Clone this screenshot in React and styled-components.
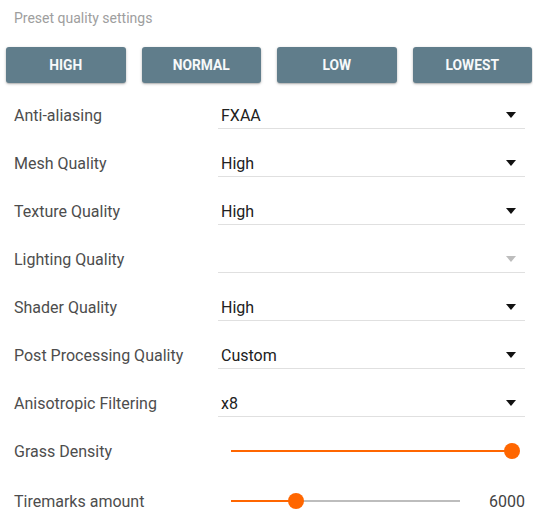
import React from "react";
import styled, { createGlobalStyle } from "styled-components";

const Global = createGlobalStyle`
  html, body { margin: 0; padding: 0; background: #fff; }
  body { font-family: Roboto, "Noto Sans", "Liberation Sans", sans-serif; }
`;

const Page = styled.div`
  width: 533px;
  box-sizing: border-box;
  padding: 0 8px 0 14px;
`;

const Title = styled.div`
  margin-top: 9px;
  height: 18px;
  line-height: 18px;
  font-size: 14px;
  color: #9e9e9e;
`;

const ButtonRow = styled.div`
  display: flex;
  gap: 16px;
  margin: 20px -7px 8px -8px;
`;

const PresetButton = styled.button`
  flex: 1;
  height: 36px;
  border: none;
  border-radius: 3px;
  background: #607d8b;
  color: #f7f9fa;
  font-family: Roboto, "Liberation Sans", sans-serif;
  font-weight: 700;
  font-size: 13.8px;
  text-transform: uppercase;
  box-shadow: 0 1px 3px rgba(0, 0, 0, 0.25), 0 1px 1px rgba(0, 0, 0, 0.12);
  cursor: pointer;
  padding: 0;
`;

const Row = styled.div`
  display: grid;
  grid-template-columns: 204px 1fr;
  align-items: center;
  height: ${(p) => p.$h || 48}px;
`;

const Label = styled.div`
  font-size: 16px;
  color: #4d4d4d;
  white-space: nowrap;
`;

const Select = styled.div`
  height: 28px;
  box-sizing: border-box;
  border-bottom: 1px solid #e0e0e0;
  display: flex;
  align-items: center;
  justify-content: space-between;
  padding: 2px 9px 0 3px;
  font-size: 16px;
  color: ${(p) => (p.$disabled ? "#bdbdbd" : "#212121")};
`;

const Arrow = styled.span`
  width: 0;
  height: 0;
  border-left: 5.5px solid transparent;
  border-right: 5.5px solid transparent;
  border-top: 6px solid ${(p) => (p.$disabled ? "#bdbdbd" : "#111")};
  margin-top: -1px;
`;

const SliderWrap = styled.div`
  display: flex;
  align-items: center;
  padding-left: 13px;
  padding-right: ${(p) => (p.$hasValue ? "1px" : "13px")};
  gap: 29px;
`;

const Track = styled.div`
  position: relative;
  flex: 1;
  height: 2px;
  background: #bdbdbd;
`;

const Fill = styled.div`
  position: absolute;
  left: 0;
  top: 0;
  height: 2px;
  background: #ff6600;
`;

const Thumb = styled.div`
  position: absolute;
  top: 1px;
  width: 16px;
  height: 16px;
  border-radius: 50%;
  background: #ff6600;
  transform: translate(-50%, -50%);
`;

const Value = styled.div`
  font-size: 16px;
  color: #424242;
  width: 35px;
  text-align: right;
`;

const selects = [
  ["Anti-aliasing", "FXAA"],
  ["Mesh Quality", "High"],
  ["Texture Quality", "High"],
  ["Lighting Quality", "", true],
  ["Shader Quality", "High"],
  ["Post Processing Quality", "Custom"],
  ["Anisotropic Filtering", "x8"],
];

function Slider({ pct, value }) {
  return (
    <SliderWrap $hasValue={value !== undefined}>
      <Track>
        <Fill style={{ width: `${pct}%` }} />
        <Thumb style={{ left: `${pct}%` }} />
      </Track>
      {value !== undefined && <Value>{value}</Value>}
    </SliderWrap>
  );
}

export default function App() {
  return (
    <>
      <Global />
      <Page>
        <Title>Preset quality settings</Title>
        <ButtonRow>
          {["High", "Normal", "Low", "Lowest"].map((b) => (
            <PresetButton key={b}>{b}</PresetButton>
          ))}
        </ButtonRow>
        {selects.map(([label, val, dis]) => (
          <Row key={label}>
            <Label>{label}</Label>
            <Select $disabled={dis}>
              <span>{val}</span>
              <Arrow $disabled={dis} />
            </Select>
          </Row>
        ))}
        <Row>
          <Label>Grass Density</Label>
          <Slider pct={100} />
        </Row>
        <Row $h={52}>
          <Label>Tiremarks amount</Label>
          <Slider pct={28.4} value="6000" />
        </Row>
      </Page>
    </>
  );
}
